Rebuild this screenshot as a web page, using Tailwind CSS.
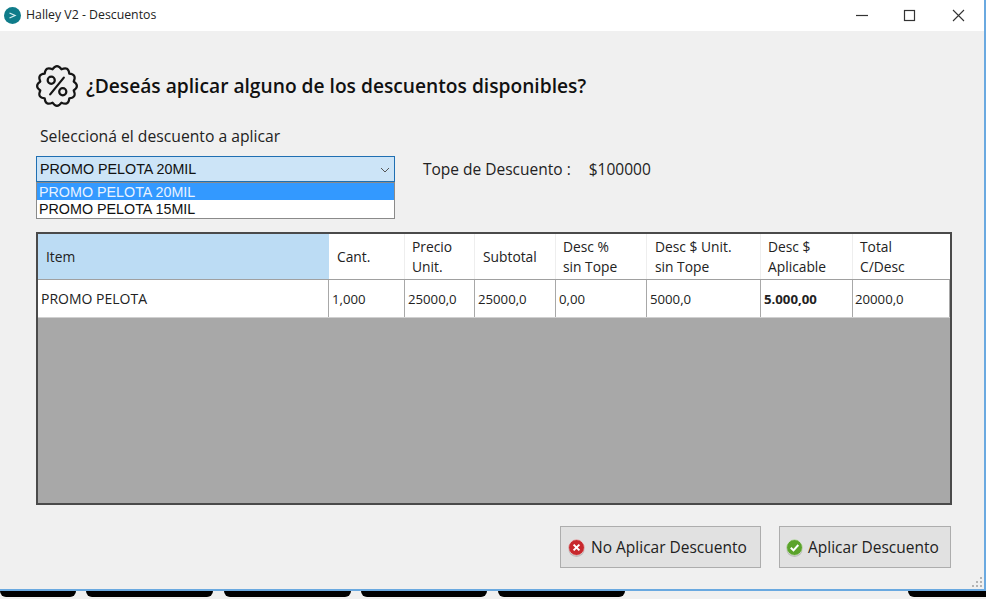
<!DOCTYPE html>
<html lang="es">
<head>
    <meta charset="UTF-8">
    <title>Halley V2 - Descuentos</title>
    <script src="https://cdn.jsdelivr.net/npm/@tailwindcss/browser@4"></script>
</head>
<body class="relative w-[986px] h-[599px] overflow-hidden bg-[#f0f0f0] font-['Open_Sans',sans-serif] text-[#1e1e1e]">

    <!-- ventana -->
    <div class="relative flex flex-col w-[986px] h-[591px] border-r-2 border-b-2 border-[#6aa9e0] bg-[#f0f0f0]">

        <!-- barra de titulo -->
        <div class="flex items-center h-[31px] shrink-0 bg-white pl-[4px]">
            <svg class="w-[17px] h-[17px]" viewBox="0 0 17 17">
                <circle cx="8.5" cy="8.5" r="8.5" fill="#0f7c8a"/>
                <path d="M5.5 6l5.5 2.5L5.5 11" fill="none" stroke="#d8eef0" stroke-width="1.3"/>
            </svg>
            <span class="ml-[5px] text-[12.3px] leading-none text-[#222]">Halley V2 - Descuentos</span>
            <div class="ml-auto flex items-center gap-[33px] pr-[18px]">
                <svg class="w-[15px] h-[15px]" viewBox="0 0 15 15"><path d="M2 7.5h12" stroke="#333" stroke-width="1.2"/></svg>
                <svg class="w-[15px] h-[15px]" viewBox="0 0 15 15"><rect x="2.5" y="2.5" width="10" height="10" fill="none" stroke="#333" stroke-width="1.2"/></svg>
                <svg class="w-[15px] h-[15px] ml-[1px]" viewBox="0 0 15 15"><path d="M2 2l11 11M13 2L2 13" stroke="#333" stroke-width="1.1"/></svg>
            </div>
        </div>

        <div class="flex flex-col flex-1 pl-[36px] pr-[32px]">
            <!-- encabezado -->
            <div class="flex items-center gap-[8px] mt-[33px] h-[44px]">
                <svg class="w-[42px] h-[42px]" viewBox="1 1 40 40" fill="none" stroke="#151515" stroke-width="2.1" stroke-linejoin="round">
                    <path d="M36.9 16.7Q40.05 10 32.7 9.3Q32 1.95 25.3 5.1Q21 -1 16.7 5.1Q10 1.95 9.3 9.3Q1.95 10 5.1 16.7Q-1 21 5.1 25.3Q1.95 32 9.3 32.7Q10 40.05 16.7 36.9Q21 43 25.3 36.9Q32 40.05 32.7 32.7Q40.05 32 36.9 25.3Q43 21 36.9 16.7Z"/>
                    <circle cx="15.5" cy="15.5" r="3.4"/>
                    <circle cx="26.5" cy="26.5" r="3.4"/>
                    <path d="M27.5 13L14.5 29" stroke-linecap="round"/>
                </svg>
                <h1 class="text-[19.2px] leading-none font-semibold text-[#111]">¿Deseás aplicar alguno de los descuentos disponibles?</h1>
            </div>

            <p class="mt-[18px] ml-[4px] text-[15.7px] leading-[20px] text-[#222]">Seleccioná el descuento a aplicar</p>

            <!-- selector -->
            <div class="flex items-center mt-[10px] h-[26px]">
                <div class="relative w-[359px] h-[26px]">
                    <div class="flex items-center justify-between h-full border border-[#1f6fb2] bg-[#cce4f7] pl-[3px] pr-[4px] pt-[2px] font-['Liberation_Sans',sans-serif] text-[14.3px] text-[#111]">
                        <span>PROMO PELOTA 20MIL</span>
                        <svg class="w-[10px] h-[6px]" viewBox="0 0 10 6"><path d="M1 1l4 4 4-4" fill="none" stroke="#555" stroke-width="1"/></svg>
                    </div>
                    <div class="absolute left-0 top-[26px] w-[359px] h-[37px] border border-[#8a8a8a] bg-white font-['Liberation_Sans',sans-serif] text-[14.3px] leading-[18px]">
                        <div class="h-[17px] pl-[2px] bg-[#3399ff] text-[#e8f3ff]">PROMO PELOTA 20MIL</div>
                        <div class="h-[18px] pl-[2px] text-[#111]">PROMO PELOTA 15MIL</div>
                    </div>
                </div>
                <span class="ml-[28px] mt-[2px] text-[15.5px] text-[#222]">Tope de Descuento :</span>
                <span class="ml-[18px] mt-[2px] text-[15.5px] text-[#222]">$100000</span>
            </div>

            <!-- tabla -->
            <div class="flex flex-col mt-[50px] w-[916px] h-[273px] border-2 border-[#4a4a4a] bg-[#a8a8a8] text-[13.8px] leading-[20px]">
                <div class="grid grid-cols-[291px_76px_70px_81px_91px_114px_92px_1fr] h-[46px] bg-white border-b border-[#a0a0a0] text-[#222]">
                    <div class="flex items-center pl-[8px] bg-[#bcdcf4]">Item</div>
                    <div class="flex items-center pl-[8px] border-r border-[#eeeeee]">Cant.</div>
                    <div class="flex items-center pl-[7px] border-r border-[#eeeeee]">Precio<br>Unit.</div>
                    <div class="flex items-center pl-[8px] border-r border-[#eeeeee]">Subtotal</div>
                    <div class="flex items-center pl-[7px] border-r border-[#eeeeee]">Desc %<br>sin Tope</div>
                    <div class="flex items-center pl-[8px] border-r border-[#eeeeee]">Desc $ Unit.<br>sin Tope</div>
                    <div class="flex items-center pl-[7px] border-r border-[#eeeeee]">Desc $<br>Aplicable</div>
                    <div class="flex items-center pl-[7px]">Total<br>C/Desc</div>
                </div>
                <div class="grid grid-cols-[291px_76px_70px_81px_91px_114px_92px_1fr] h-[38px] bg-white border-b border-[#d0d0d0] text-[13.2px] text-[#222]">
                    <div class="flex items-center pl-[3px] border-r border-[#a8a8a8] text-[14px]">PROMO PELOTA</div>
                    <div class="flex items-center pl-[3px] border-r border-[#a8a8a8]">1,000</div>
                    <div class="flex items-center pl-[3px] border-r border-[#a8a8a8]">25000,0</div>
                    <div class="flex items-center pl-[3px] border-r border-[#a8a8a8]">25000,0</div>
                    <div class="flex items-center pl-[3px] border-r border-[#a8a8a8]">0,00</div>
                    <div class="flex items-center pl-[3px] border-r border-[#a8a8a8]">5000,0</div>
                    <div class="flex items-center pl-[3px] border-r border-[#a8a8a8] font-bold">5.000,00</div>
                    <div class="flex items-center pl-[2px] border-r border-[#a8a8a8]">20000,0</div>
                </div>
            </div>

            <!-- botones -->
            <div class="flex justify-end gap-[18px] mt-[21px] w-[915px]">
                <button class="flex items-center w-[201px] h-[42px] pl-[7px] pt-[1px] border border-[#adadad] bg-[#e1e1e1] text-[15.5px] text-[#222]">
                    <svg class="w-[17px] h-[18px] mr-[6px]" viewBox="0 0 17 18">
                        <circle cx="8.5" cy="9.7" r="8.2" fill="#8a8a8a" opacity="0.45"/>
                        <circle cx="8.5" cy="8.5" r="7.9" fill="#c8282d" stroke="#f0e4e4" stroke-width="0.6"/>
                        <path d="M5.6 5.6l5.8 5.8M11.4 5.6l-5.8 5.8" stroke="#fff" stroke-width="2"/>
                    </svg>
                    No Aplicar Descuento
                </button>
                <button class="flex items-center w-[172px] h-[42px] pl-[6px] pt-[1px] border border-[#adadad] bg-[#e1e1e1] text-[15.5px] text-[#222]">
                    <svg class="w-[17px] h-[18px] mr-[5px]" viewBox="0 0 17 18">
                        <circle cx="8.5" cy="9.7" r="8.2" fill="#8a8a8a" opacity="0.45"/>
                        <circle cx="8.5" cy="8.5" r="7.9" fill="#5ba32b" stroke="#e6f0e0" stroke-width="0.6"/>
                        <path d="M4.8 8.7l2.7 2.7L12.3 6" fill="none" stroke="#fff" stroke-width="2"/>
                    </svg>
                    Aplicar Descuento
                </button>
            </div>
        </div>

        <!-- agarre de redimension -->
        <svg class="absolute right-[1px] bottom-[1px] w-[12px] h-[12px]" viewBox="0 0 12 12" fill="#b4b4b4">
            <rect x="9" y="1" width="2" height="2"/>
            <rect x="5" y="5" width="2" height="2"/><rect x="9" y="5" width="2" height="2"/>
            <rect x="1" y="9" width="2" height="2"/><rect x="5" y="9" width="2" height="2"/><rect x="9" y="9" width="2" height="2"/>
        </svg>
    </div>

    <!-- pestañas que asoman detras de la ventana -->
    <div class="flex h-[6px]">
        <div class="w-[76px] rounded-b-[6px] bg-black"></div>
        <div class="ml-[10px] w-[127px] rounded-b-[6px] bg-black"></div>
        <div class="ml-[11px] w-[127px] rounded-b-[6px] bg-black"></div>
        <div class="ml-[10px] w-[127px] rounded-b-[6px] bg-black"></div>
        <div class="ml-[11px] w-[127px] rounded-b-[6px] bg-black"></div>
        <div class="ml-[283px] w-[78px] rounded-bl-[6px] bg-black"></div>
    </div>
</body>
</html>
